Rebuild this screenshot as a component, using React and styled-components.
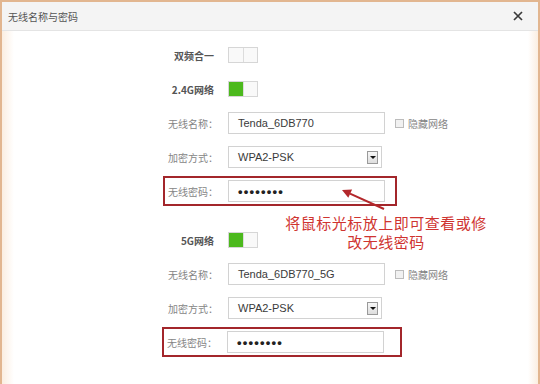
import styled, { createGlobalStyle } from "styled-components";

const GlobalStyle = createGlobalStyle`
  html, body {
    margin: 0;
    padding: 0;
    background: #ffffff;
    overflow: hidden;
  }
  body {
    font-family: "Liberation Sans", "Noto Sans CJK SC", sans-serif;
  }
`;

const Frame = styled.div`
  position: relative;
  width: 540px;
  height: 400px;
  box-sizing: border-box;
  border: 2px solid #e2b690;
  background: #fff;
`;

const Header = styled.div`
  display: flex;
  align-items: center;
  justify-content: space-between;
  height: 28px;
  padding: 0 15px 0 6px;
  background: #f4f4f4;
  border-bottom: 1px solid #e4e4e4;
`;

const Title = styled.div`
  font-family: "Noto Sans CJK SC", sans-serif;
  font-size: 10px;
  color: #555;
`;

const Close = styled.svg`
  width: 10px;
  height: 10px;
  display: block;
`;

const Body = styled.div`
  height: 360px;
  padding: 7px 0 0 161px;
  background: linear-gradient(
    to right,
    #fbeee1 0,
    #ffffff 12px,
    #ffffff calc(100% - 10px),
    #fbeee1 100%
  );
`;

const Row = styled.div`
  height: 34px;
  display: flex;
  align-items: center;
`;

const Spacer = styled.div`
  height: 15px;
`;

const Field = styled.div`
  display: grid;
  grid-template-columns: 53px 157px auto;
  column-gap: 10px;
  align-items: center;
  box-sizing: border-box;
  height: 30px;
  width: ${(p) => p.$width || 300}px;
  margin-left: ${(p) => p.$shift || 0}px;
  border: 2px solid ${(p) => (p.$mark ? "#a3262b" : "transparent")};
`;

const Label = styled.div`
  font-family: "Noto Sans CJK SC", sans-serif;
  font-size: 10px;
  text-align: right;
  white-space: nowrap;
  color: ${(p) => (p.$strong ? "#555" : "#858585")};
  font-weight: ${(p) => (p.$strong ? 700 : 400)};
  padding-right: ${(p) => (p.$strong ? 4 : 0)}px;
`;

const Toggle = styled.div`
  display: flex;
  width: 30px;
  height: 16px;
  box-sizing: border-box;
  border: 1px solid #d6d6d6;
  background: #fafafa;
`;

const Half = styled.div`
  flex: 1;
  background: ${(p) => (p.$on ? "#4cb91d" : "#f9f9f9")};
  & + & {
    border-left: 1px solid #dcdcdc;
  }
`;

const Input = styled.div`
  box-sizing: border-box;
  height: 22px;
  border: 1px solid #d2d2d2;
  padding-left: 9px;
  display: flex;
  align-items: center;
  font-size: 11px;
  color: #3a3a3a;
  background: #fff;
`;

const Dots = styled.span`
  font-size: 13px;
  font-weight: 700;
  letter-spacing: 1.2px;
  color: #222;
`;

const Select = styled(Input)`
  width: 154px;
  justify-content: space-between;
  padding-right: 3px;
`;

const DropButton = styled.div`
  width: 11px;
  height: 13px;
  box-sizing: border-box;
  border: 1px solid #9a9a9a;
  background: linear-gradient(#f7f7f7, #dedede);
  display: flex;
  align-items: center;
  justify-content: center;
  &::after {
    content: "";
    border-left: 3px solid transparent;
    border-right: 3px solid transparent;
    border-top: 3px solid #111;
  }
`;

const Hidden = styled.label`
  display: flex;
  align-items: center;
  gap: 4px;
  font-family: "Noto Sans CJK SC", sans-serif;
  font-size: 10px;
  color: #858585;
  white-space: nowrap;
`;

const Box = styled.span`
  width: 9px;
  height: 9px;
  box-sizing: border-box;
  border: 1px solid #bcbcbc;
  background: #f1f1f1;
`;

const Arrow = styled.svg`
  position: absolute;
  left: 333px;
  top: 183px;
  width: 60px;
  height: 30px;
  overflow: visible;
`;

const Note = styled.div`
  position: absolute;
  left: 273px;
  top: 211px;
  width: 222px;
  text-align: center;
  font-family: "Noto Sans CJK SC", sans-serif;
  font-size: 15px;
  line-height: 19px;
  letter-spacing: 0.5px;
  color: #cf3430;
`;

function ToggleSwitch({ on }) {
  return (
    <Toggle>
      <Half $on={on} />
      <Half />
    </Toggle>
  );
}

function Band({ title, ssid, shift, width }) {
  return (
    <>
      <Row>
        <Field>
          <Label $strong>{title}</Label>
          <ToggleSwitch on />
        </Field>
      </Row>
      <Row>
        <Field>
          <Label>无线名称：</Label>
          <Input>{ssid}</Input>
          <Hidden>
            <Box />
            隐藏网络
          </Hidden>
        </Field>
      </Row>
      <Row>
        <Field>
          <Label>加密方式：</Label>
          <Select>
            WPA2-PSK
            <DropButton />
          </Select>
        </Field>
      </Row>
      <Row>
        <Field $mark $width={width} $shift={shift}>
          <Label>无线密码：</Label>
          <Input>
            <Dots>••••••••</Dots>
          </Input>
        </Field>
      </Row>
    </>
  );
}

export default function App() {
  return (
    <>
      <GlobalStyle />
      <Frame>
        <Header>
          <Title>无线名称与密码</Title>
          <Close viewBox="0 0 10 10">
            <path d="M1 1 L9 9 M9 1 L1 9" stroke="#3a3a3a" strokeWidth="1.7" />
          </Close>
        </Header>
        <Body>
          <Row>
            <Field>
              <Label $strong>双频合一</Label>
              <ToggleSwitch on={false} />
            </Field>
          </Row>
          <Band title="2.4G网络" ssid="Tenda_6DB770" width={234} />
          <Spacer />
          <Band title="5G网络" ssid="Tenda_6DB770_5G" width={240} shift={-1} />
        </Body>
        <Arrow viewBox="0 0 60 30">
          <line x1="49" y1="24" x2="15" y2="8.7" stroke="#b3272b" strokeWidth="2" />
          <polygon points="7,5 17.1,4.6 13.3,12.8" fill="#b3272b" />
        </Arrow>
        <Note>
          将鼠标光标放上即可查看或修
          <br />
          改无线密码
        </Note>
      </Frame>
    </>
  );
}
